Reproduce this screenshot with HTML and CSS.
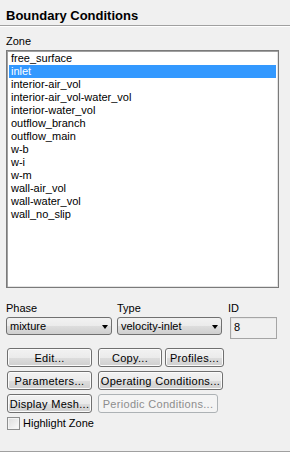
FILE: index.html
```html
<!DOCTYPE html>
<html lang="en">
	<head>
		<meta charset="utf-8">
		<title>Boundary Conditions</title>
		<link rel="stylesheet" href="styles.css">
	</head>
	<body>
		<div class="panel">
			<div class="title">Boundary Conditions</div>
			<div class="label zone-label">Zone</div>
			<ul class="listbox">
				<li>free_surface</li>
				<li class="selected">inlet</li>
				<li>interior-air_vol</li>
				<li>interior-air_vol-water_vol</li>
				<li>interior-water_vol</li>
				<li>outflow_branch</li>
				<li>outflow_main</li>
				<li>w-b</li>
				<li>w-i</li>
				<li>w-m</li>
				<li>wall-air_vol</li>
				<li>wall-water_vol</li>
				<li>wall_no_slip</li>
			</ul>
			<div class="fields">
				<div class="field">
					<div class="label">Phase</div>
					<div class="combo combo-phase">mixture<span class="arrow"></span></div>
				</div>
				<div class="field">
					<div class="label">Type</div>
					<div class="combo combo-type">velocity-inlet<span class="arrow"></span></div>
				</div>
				<div class="field">
					<div class="label">ID</div>
					<div class="id-box">8</div>
				</div>
			</div>
			<div class="buttons">
				<div class="btn-row">
					<button class="btn w-left">Edit...</button>
					<div class="pair">
						<button class="btn w-copy">Copy...</button>
						<button class="btn w-profiles">Profiles...</button>
					</div>
				</div>
				<div class="btn-row">
					<button class="btn w-left">Parameters...</button>
					<button class="btn w-operating">Operating Conditions...</button>
				</div>
				<div class="btn-row">
					<button class="btn w-left">Display Mesh...</button>
					<button class="btn w-periodic" disabled>Periodic Conditions...</button>
				</div>
			</div>
			<label class="check">
				<span class="check-box"></span>
				Highlight Zone
			</label>
		</div>
	</body>
</html>
```

FILE: styles.css
```css
html, body {
	margin: 0;
	padding: 0;
}
body {
	width: 290px;
	height: 453px;
	overflow: hidden;
	background-color: #f0f0f0;
	font-family: 'Liberation Sans', Arial, sans-serif;
	font-size: 11px;
	color: #000;
}
.panel {
	height: 452px;
	box-sizing: border-box;
	border-bottom: 1px solid #a0a0a0;
	box-shadow: 0 1px 0 #fff;
}
.title {
	height: 26px;
	box-sizing: border-box;
	padding: 8px 6px 0;
	font-size: 13px;
	font-weight: bold;
	line-height: 15px;
	border-bottom: 1px solid #a0a0a0;
	box-shadow: 0 1px 0 #fff;
}
.label {
	line-height: 13px;
	height: 13px;
}
.zone-label {
	margin: 9px 0 0 6px;
}
.listbox {
	list-style: none;
	margin: 2px 0 0 6px;
	padding: 1px 2px;
	width: 273px;
	height: 238px;
	box-sizing: border-box;
	background-color: #fff;
	border: 1px solid #7a7a7a;
	box-shadow: inset 1px 1px 0 #a0a0a0, inset -1px -1px 0 #e3e3e3;
}
.listbox li {
	line-height: 13px;
	height: 13px;
	padding-left: 2px;
	white-space: nowrap;
}
.listbox li.selected {
	background-color: #3399ff;
	color: #fff;
}
.fields {
	display: grid;
	grid-template-columns: 106px 106px 49px;
	column-gap: 5px;
	margin: 14px 0 0 6px;
}
.field .label {
	margin-bottom: 2px;
}
.combo {
	position: relative;
	height: 18px;
	box-sizing: border-box;
	padding-left: 3px;
	line-height: 16px;
	border: 1px solid #707070;
	border-radius: 3px;
	background: linear-gradient(#f2f2f2 0%, #ebebeb 50%, #dddddd 51%, #cfcfcf 100%);
}
.combo-phase {
	width: 106px;
}
.combo-type {
	width: 105px;
}
.arrow {
	position: absolute;
	right: 3px;
	top: 7px;
	width: 0;
	height: 0;
	border-left: 3px solid transparent;
	border-right: 3px solid transparent;
	border-top: 4px solid #000;
}
.id-box {
	margin-left: 2px;
	width: 47px;
	height: 22px;
	box-sizing: border-box;
	padding: 3px 0 0 3px;
	line-height: 13px;
	border: 1px solid #a5a5a5;
	box-shadow: inset 1px 1px 0 #e6e6e6;
	background-color: #f0f0f0;
}
.buttons {
	display: flex;
	flex-direction: column;
	gap: 4px;
	margin: 9px 0 0 7px;
}
.btn-row, .pair {
	display: flex;
	gap: 6px;
}
.pair {
	gap: 3px;
}
.btn {
	height: 19px;
	padding: 0;
	margin: 0;
	font-family: 'Liberation Sans', Arial, sans-serif;
	font-size: 11px;
	letter-spacing: 0.3px;
	color: #000;
	border: 1px solid #707070;
	border-radius: 3px;
	background: linear-gradient(#f2f2f2 0%, #ebebeb 50%, #dddddd 51%, #cfcfcf 100%);
	box-shadow: inset 0 0 0 1px #fbfbfb;
}
.btn:disabled {
	color: #8d8d8d;
	border-color: #adb2b5;
	background: #f4f4f4;
	box-shadow: none;
}
.w-left {
	width: 85px;
}
.w-copy {
	width: 64px;
}
.w-profiles {
	width: 59px;
}
.w-operating {
	width: 125px;
}
.w-periodic {
	width: 120px;
}
.check {
	display: flex;
	align-items: center;
	gap: 3px;
	margin: 4px 0 0 7px;
	line-height: 13px;
}
.check-box {
	width: 13px;
	height: 13px;
	box-sizing: border-box;
	border: 1px solid #8e8f8f;
	background: linear-gradient(135deg, #dcdcdc, #fbfbfb);
	box-shadow: inset 0 0 0 1px #f4f4f4;
}
```
